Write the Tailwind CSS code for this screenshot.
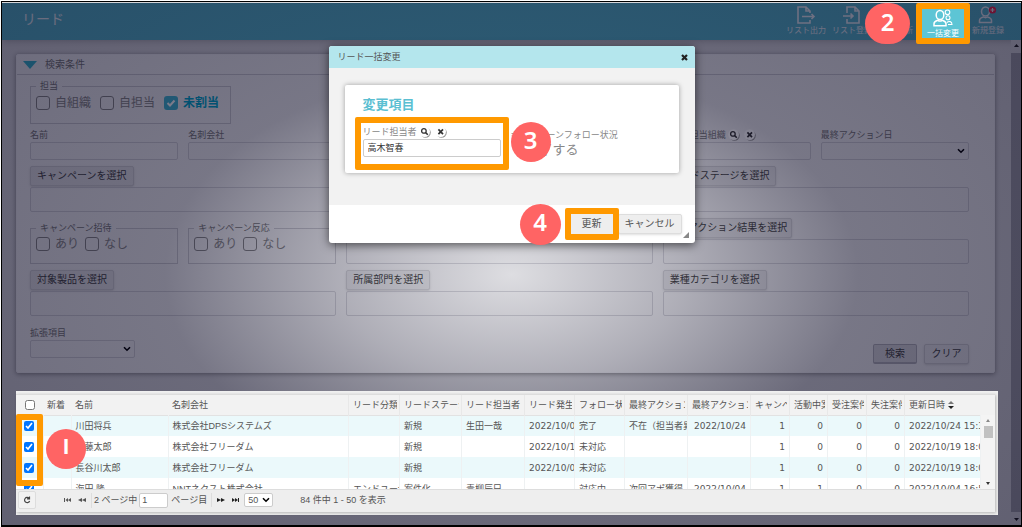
<!DOCTYPE html>
<html lang="ja">
<head>
<meta charset="utf-8">
<meta name="viewport" content="width=device-width, initial-scale=1">
<title>リード一括変更</title>
<script src="https://cdn.jsdelivr.net/npm/@tailwindcss/browser@4"></script>
</head>
<body class="bg-white pt-px pl-px font-['Liberation_Sans','Noto_Sans_CJK_JP',sans-serif] text-[9px] leading-[14px] text-[#555]">
<svg class="hidden" aria-hidden="true">
  <symbol id="chev" viewBox="0 0 8 6"><path d="M1 1.2 4 4.2 7 1.2" fill="none" stroke="#000" stroke-width="1.6"/></symbol>
  <symbol id="lens" viewBox="0 0 12 12"><circle cx="6.6" cy="6.6" r="5.2" fill="#999"/><circle cx="5.6" cy="5.6" r="5.4" fill="#fff"/><circle cx="4.9" cy="4.9" r="2.3" fill="none" stroke="#333" stroke-width="1.3"/><path d="m6.6 6.6 2.2 2.2" stroke="#333" stroke-width="1.5"/></symbol>
  <symbol id="clear" viewBox="0 0 12 12"><circle cx="6.6" cy="6.6" r="5.2" fill="#999"/><circle cx="5.6" cy="5.6" r="5.4" fill="#fff"/><path d="m3.4 3.4 4.6 4.8M8 3.4 3.4 8.2" stroke="#333" stroke-width="1.7"/></symbol>
</svg>
<div class="relative flex min-h-[calc(100vh-1px)] flex-col border border-b-2 border-black bg-[#d6d6da]">

  <header class="mt-px flex h-[37px] shrink-0 items-start justify-between bg-[#56b4c9] pr-[15px] pl-5 text-[#e8eef4] shadow-md">
    <h1 class="pt-1.5 text-[14px] leading-[20px]">リード</h1>
    <nav class="flex h-full gap-1.5 text-[8px] leading-[10px]">
      <button class="flex w-10 flex-col items-center justify-between pt-[3px] pb-1 whitespace-nowrap">
        <svg class="h-[18px] w-5" viewBox="0 0 20 18" fill="none" stroke="currentColor" stroke-width="1.6"><path d="M14 7V5l-4-4H2v16h12v-3M10 1v4h4M6 10.500h12M15.500 8l2.500 2.500-2.500 2.500"/></svg>リスト出力</button>
      <button class="flex w-10 flex-col items-center justify-between pt-[3px] pb-1 whitespace-nowrap">
        <svg class="h-[18px] w-5" viewBox="0 0 20 18" fill="none" stroke="currentColor" stroke-width="1.6"><path d="M5 7V1h8l4 4v12H5v-4M13 1v4h4M1 10h10M8.500 7.500 11 10l-2.500 2.500"/></svg>リスト登録</button>
      <button class="relative flex w-[38px] flex-col items-center justify-between pt-[3px] pb-1 whitespace-nowrap">
        <svg class="h-[18px] w-5" viewBox="0 0 20 18" fill="none" stroke="currentColor" stroke-width="1.4"><circle cx="8" cy="6" r="4.500"/><path d="M2 17c0-6 12-6 12 0z"/></svg>一括更新
        <span class="absolute top-0 -left-[13px] z-30 grid h-[41px] w-[45px] place-items-center rounded-full bg-[#ff6464] pb-1 font-['Noto_Sans',sans-serif] text-[24px] font-semibold text-white">2</span></button>
      <button class="relative z-20 flex w-[42px] flex-col items-center justify-between bg-[#5dc5d5] pt-1.5 pb-px whitespace-nowrap text-white">
        <svg class="h-[18px] w-5" viewBox="0 0 20 18" fill="none" stroke="currentColor" stroke-width="1.5"><ellipse cx="7" cy="6" rx="3.800" ry="4.600"/><path d="M1 16.800v-2c0-2 2-3 3.800-3.500 1.500 1 2.900 1 4.400 0 1.800.5 3.800 1.500 3.800 3.500v2z"/><circle cx="14.500" cy="3.300" r="2.300" stroke-width="1.100"/><circle cx="15" cy="8.800" r="2" stroke-width="1.100"/><path d="M14 13.500c2-2 5-1 5 2h-4" stroke-width="1.100"/></svg>一括変更
        <span class="absolute -inset-x-1.5 -top-0 -bottom-1 rounded-xs border-6 border-[#ff9900]"></span></button>
      <button class="flex w-9 flex-col items-center justify-between pt-[3px] pb-1 whitespace-nowrap">
        <svg class="h-[18px] w-5" viewBox="0 0 20 18" fill="none" stroke="currentColor" stroke-width="1.5"><ellipse cx="7.500" cy="5.500" rx="4" ry="4.500"/><path d="M1.500 16.500v-2c0-2 2-3 4-3.500 1.500 1 2.500 1 4 0 2 .5 4 1.500 4 3.500v2z"/><circle cx="14.500" cy="4" r="3.600" fill="#f0264a" stroke="none"/><path d="M12.500 4h4M14.500 2v4" stroke-width="1.200"/></svg>新規登録</button>
    </nav>
  </header>

  <div class="flex flex-1">
    <main class="min-w-0 flex-1 pt-3.5 pr-[13px] pb-2.5 pl-3.5">
      <form class="mr-[3px] rounded-xs border border-[#ececef] bg-[#f0f0f2] text-[#777] shadow-[0_1px_5px_rgb(0_0_0/0.4)]">
        <h2 class="flex h-5 items-center gap-2 border-b border-[#c8c8ce] pl-1.5 text-[10px] leading-[16px]">
          <svg class="h-2 w-3.5" viewBox="0 0 14 8"><path d="M0 0h14L7 8z" fill="#38b4cc"/></svg>検索条件</h2>
        <div class="pt-1 pr-[25px] pb-3.5 pl-[13px]">
          <fieldset class="h-[45px] w-[201px] border border-[#c8c8ce] px-[5px]">
            <legend class="px-1 leading-[14px]">担当</legend>
            <div class="flex items-center gap-[9px] pt-px text-[12px] leading-[18px] text-[#888]">
              <label class="flex items-center gap-[5px]"><input type="checkbox" class="size-3.5 appearance-none rounded-[3px] border border-[#888]">自組織</label>
              <label class="flex items-center gap-[5px]"><input type="checkbox" class="size-3.5 appearance-none rounded-[3px] border border-[#888]">自担当</label>
              <label class="flex items-center gap-[5px] font-bold text-[#00a8cc]"><span class="relative flex"><input type="checkbox" checked class="size-3.5 appearance-none rounded-[3px] bg-[#41b7d2]"><svg class="pointer-events-none absolute inset-0 size-3.5" viewBox="0 0 14 14"><path d="m3.500 7 2.500 2.500 4.500-5" fill="none" stroke="#fff" stroke-width="2"/></svg></span>未割当</label>
            </div>
          </fieldset>

          <div class="mt-1 grid grid-cols-6 gap-x-2.5 gap-y-1.5">
            <label class="block whitespace-nowrap">名前<input class="block h-[18px] w-full rounded-xs border border-[#cfcfd5]"></label>
            <label class="col-span-2 block whitespace-nowrap">名刺会社<input class="block h-[18px] w-full rounded-xs border border-[#cfcfd5]"></label>
            <label class="block whitespace-nowrap">リード担当者<input class="block h-[18px] w-full rounded-xs border border-[#cfcfd5]"></label>
            <label class="block whitespace-nowrap"><span class="flex items-center">リード担当組織<svg class="ml-0.5 size-3"><use href="#lens"/></svg><svg class="ml-1 size-3"><use href="#clear"/></svg></span><input class="block h-[18px] w-full rounded-xs border border-[#cfcfd5]"></label>
            <label class="block whitespace-nowrap">最終アクション日<span class="relative block"><select class="block h-[18px] w-full appearance-none rounded-xs border border-[#cfcfd5]"><option></option></select><svg class="pointer-events-none absolute top-1.5 right-1 h-1.5 w-2"><use href="#chev"/></svg></span></label>

            <div class="col-span-2"><button type="button" class="mb-px block h-5 rounded-xs border border-[#cfcfd3] bg-[#e2e2e5] px-1.5 text-[10px] text-[#444] shadow-sm">キャンペーンを選択</button><div class="h-[25px] rounded-xs border border-[#cfcfd5]"></div></div>
            <div class="col-span-2"><button type="button" class="mb-px block h-5 rounded-xs border border-[#cfcfd3] bg-[#e2e2e5] px-1.5 text-[10px] text-[#444] shadow-sm">リード分類を選択</button><div class="h-[25px] rounded-xs border border-[#cfcfd5]"></div></div>
            <div class="col-span-2"><button type="button" class="mb-px block h-5 rounded-xs border border-[#cfcfd3] bg-[#e2e2e5] px-1.5 text-[10px] text-[#444] shadow-sm">リードステージを選択</button><div class="h-[25px] rounded-xs border border-[#cfcfd5]"></div></div>

            <fieldset class="mt-[3px] h-[43px] border border-[#c8c8ce] px-[5px]">
              <legend class="px-1">キャンペーン招待</legend>
              <div class="flex items-center gap-1.5 text-[12px] leading-[18px] text-[#888]">
                <label class="flex items-center gap-[5px]"><input type="checkbox" class="size-3.5 appearance-none rounded-[3px] border border-[#888]">あり</label>
                <label class="flex items-center gap-[5px]"><input type="checkbox" class="size-3.5 appearance-none rounded-[3px] border border-[#888]">なし</label>
              </div>
            </fieldset>
            <fieldset class="mt-[3px] h-[43px] border border-[#c8c8ce] px-[5px]">
              <legend class="px-1">キャンペーン反応</legend>
              <div class="flex items-center gap-1.5 text-[12px] leading-[18px] text-[#888]">
                <label class="flex items-center gap-[5px]"><input type="checkbox" class="size-3.5 appearance-none rounded-[3px] border border-[#888]">あり</label>
                <label class="flex items-center gap-[5px]"><input type="checkbox" class="size-3.5 appearance-none rounded-[3px] border border-[#888]">なし</label>
              </div>
            </fieldset>
            <div class="col-span-2"><button type="button" class="mb-px block h-5 rounded-xs border border-[#cfcfd3] bg-[#e2e2e5] px-1.5 text-[10px] text-[#444] shadow-sm">アクションを選択</button><div class="h-[25px] rounded-xs border border-[#cfcfd5]"></div></div>
            <div class="col-span-2"><button type="button" class="mb-px block h-5 rounded-xs border border-[#cfcfd3] bg-[#e2e2e5] px-1 text-[10px] text-[#444] shadow-sm">最終アクション結果を選択</button><div class="h-[25px] rounded-xs border border-[#cfcfd5]"></div></div>

            <div class="col-span-2"><button type="button" class="mb-px block h-5 rounded-xs border border-[#cfcfd3] bg-[#e2e2e5] px-1.5 text-[10px] text-[#444] shadow-sm">対象製品を選択</button><div class="h-[25px] rounded-xs border border-[#cfcfd5]"></div></div>
            <div class="col-span-2"><button type="button" class="mb-px block h-5 rounded-xs border border-[#cfcfd3] bg-[#e2e2e5] px-1.5 text-[10px] text-[#444] shadow-sm">所属部門を選択</button><div class="h-[25px] rounded-xs border border-[#cfcfd5]"></div></div>
            <div class="col-span-2"><button type="button" class="mb-px block h-5 rounded-xs border border-[#cfcfd3] bg-[#e2e2e5] px-1.5 text-[10px] text-[#444] shadow-sm">業種カテゴリを選択</button><div class="h-[25px] rounded-xs border border-[#cfcfd5]"></div></div>
          </div>

          <div class="mt-2.5 flex items-end justify-between">
            <label class="block w-[105px]">拡張項目<span class="relative block"><select class="block h-[18px] w-full appearance-none rounded-xs border border-[#cfcfd5]"><option></option></select><svg class="pointer-events-none absolute top-1.5 right-1 h-1.5 w-2"><use href="#chev"/></svg></span></label>
            <div class="-mb-1.5 flex gap-[7px] text-[10px] text-[#444]">
              <button type="button" class="h-5 w-11 rounded-xs border border-b-2 border-[#b0b0b8] bg-[#d6d6da]">検索</button>
              <button type="button" class="h-5 w-[45px] rounded-xs border border-[#ceced2] bg-[#e8e8eb] shadow-sm">クリア</button>
            </div>
          </div>
        </div>
      </form>

      <section class="relative z-20 mt-[18px] bg-[#f0f0f0] py-[3px] pr-[3px]">
        <div class="relative border-t border-[#ddd] bg-[#f2f2f2] shadow-[1px_1px_3px_rgb(0_0_0/0.25)]">
          <div class="h-[94px] overflow-hidden pr-3.5">
            <table class="w-full table-fixed border-collapse text-left whitespace-nowrap">
              <colgroup><col class="w-[27px]"><col class="w-[28px]"><col class="w-[97px]"><col><col class="w-[51px]"><col class="w-[62px]"><col class="w-[63px]"><col class="w-[50px]"><col class="w-[50px]"><col class="w-[63px]"><col class="w-[63px]"><col class="w-[39px]"><col class="w-[38px]"><col class="w-[39px]"><col class="w-[38px]"><col class="w-[76px]"></colgroup>
              <thead>
                <tr class="h-5 border-b border-[#e2e2e2] [&>th]:p-0 [&>th]:font-normal [&>th+th]:pr-0.5 [&>th+th]:pl-1 [&_div]:overflow-hidden">
                  <th><input type="checkbox" aria-label="すべて選択" class="mx-auto block size-2.5"></th>
                  <th><div>新着</div></th><th><div>名前</div></th><th><div>名刺会社</div></th>
                  <th class="border-l border-[#e8e8e8]"><div>リード分類</div></th><th class="border-l border-[#e8e8e8]"><div>リードステージ</div></th><th class="border-l border-[#e8e8e8]"><div>リード担当者</div></th><th class="border-l border-[#e8e8e8]"><div>リード発生</div></th><th class="border-l border-[#e8e8e8]"><div>フォロー状況</div></th><th class="border-l border-[#e8e8e8]"><div>最終アクション</div></th><th class="border-l border-[#e8e8e8]"><div>最終アクション日</div></th><th class="border-l border-[#e8e8e8]"><div>キャンペーン</div></th><th class="border-l border-[#e8e8e8]"><div>活動中案件</div></th><th class="border-l border-[#e8e8e8]"><div>受注案件</div></th><th class="border-l border-[#e8e8e8]"><div>失注案件</div></th>
                  <th class="border-l border-[#e8e8e8]"><div class="flex items-center gap-[3px]">更新日時<svg class="h-2 w-1.5" viewBox="0 0 6 8"><path d="M0 3h6L3 0z" fill="#777"/><path d="M0 5h6L3 8z" fill="#222"/></svg></div></th>
                </tr>
              </thead>
              <tbody class="[&>tr]:h-[21px] [&_td]:overflow-hidden [&_td]:border-r [&_td]:border-[#eef1f2] [&_td]:p-0 [&_td+td]:pl-1">
                <tr class="bg-[#ebf9fb]"><td><input type="checkbox" checked aria-label="川田将兵" class="mx-auto block size-2.5"></td><td></td><td>川田将兵</td><td>株式会社DPSシステムズ</td><td></td><td>新規</td><td>生田一哉</td><td class="font-['DejaVu_Sans',sans-serif]">2022/10/0</td><td>完了</td><td>不在（担当者異動）</td><td class="font-['DejaVu_Sans',sans-serif]"><div class="pl-0.5">2022/10/24</div></td><td class="text-right font-['DejaVu_Sans',sans-serif]"><div class="pr-1">1</div></td><td class="text-right font-['DejaVu_Sans',sans-serif]"><div class="pr-1">0</div></td><td class="text-right font-['DejaVu_Sans',sans-serif]"><div class="pr-1">0</div></td><td class="text-right font-['DejaVu_Sans',sans-serif]"><div class="pr-1">0</div></td><td class="font-['DejaVu_Sans',sans-serif]">2022/10/24 15:30</td></tr>
                <tr class="bg-white"><td><input type="checkbox" checked aria-label="佐藤太郎" class="mx-auto block size-2.5"></td><td></td><td>佐藤太郎</td><td>株式会社フリーダム</td><td></td><td>新規</td><td></td><td class="font-['DejaVu_Sans',sans-serif]">2022/10/1</td><td>未対応</td><td></td><td></td><td class="text-right font-['DejaVu_Sans',sans-serif]"><div class="pr-1">1</div></td><td class="text-right font-['DejaVu_Sans',sans-serif]"><div class="pr-1">0</div></td><td class="text-right font-['DejaVu_Sans',sans-serif]"><div class="pr-1">0</div></td><td class="text-right font-['DejaVu_Sans',sans-serif]"><div class="pr-1">0</div></td><td class="font-['DejaVu_Sans',sans-serif]">2022/10/19 18:00</td></tr>
                <tr class="bg-[#ebf9fb]"><td><input type="checkbox" checked aria-label="長谷川太郎" class="mx-auto block size-2.5"></td><td></td><td>長谷川太郎</td><td>株式会社フリーダム</td><td></td><td>新規</td><td></td><td class="font-['DejaVu_Sans',sans-serif]">2022/10/0</td><td>未対応</td><td></td><td></td><td class="text-right font-['DejaVu_Sans',sans-serif]"><div class="pr-1">1</div></td><td class="text-right font-['DejaVu_Sans',sans-serif]"><div class="pr-1">0</div></td><td class="text-right font-['DejaVu_Sans',sans-serif]"><div class="pr-1">0</div></td><td class="text-right font-['DejaVu_Sans',sans-serif]"><div class="pr-1">0</div></td><td class="font-['DejaVu_Sans',sans-serif]">2022/10/19 18:00</td></tr>
                <tr class="bg-white"><td><input type="checkbox" checked aria-label="海田 隆" class="mx-auto block size-2.5"></td><td></td><td>海田 隆</td><td>NNTネクスト株式会社</td><td>エンドユーザ</td><td>案件化</td><td>青柳辰巳</td><td></td><td>対応中</td><td>次回アポ獲得</td><td class="font-['DejaVu_Sans',sans-serif]"><div class="pl-0.5">2022/10/04</div></td><td class="text-right font-['DejaVu_Sans',sans-serif]"><div class="pr-1">1</div></td><td class="text-right font-['DejaVu_Sans',sans-serif]"><div class="pr-1">1</div></td><td class="text-right font-['DejaVu_Sans',sans-serif]"><div class="pr-1">0</div></td><td class="text-right font-['DejaVu_Sans',sans-serif]"><div class="pr-1">0</div></td><td class="font-['DejaVu_Sans',sans-serif]">2022/10/04 16:50</td></tr>
              </tbody>
            </table>
          </div>
          <div class="absolute top-5 right-0 flex h-[74px] w-3.5 flex-col items-center bg-[#f4f4f4] py-1">
            <svg class="h-[3px] w-1" viewBox="0 0 4 3"><path d="M0 3h4L2 0z" fill="#888"/></svg>
            <span class="mt-1 h-3 w-[9px] bg-[#c1c1c1]"></span>
            <svg class="mt-auto h-[3px] w-1" viewBox="0 0 4 3"><path d="M0 0h4L2 3z" fill="#333"/></svg>
          </div>
          <span class="absolute top-[19px] left-0 h-[72px] w-[27px] rounded-xs border-6 border-[#ff9900]"></span>
          <span aria-label="1" class="absolute top-[34px] left-[30px] grid size-10 place-items-center rounded-full bg-[#ff6464] pb-1 text-[22px] font-bold text-white">I</span>

          <div class="flex h-[23px] items-center border-t border-[#ddd] bg-[#eee] pb-0.5 pl-0.5">
            <button aria-label="再読み込み" class="grid h-[18px] w-[18px] place-items-center rounded-xs border border-[#ddd] bg-[#f2f2f2]"><svg class="size-2" viewBox="0 0 8 8" fill="none" stroke="#444" stroke-width="1.200"><path d="M6 2.200A2.600 2.600 0 1 0 6.600 5M6.500.5v2.300H4"/></svg></button>
            <button aria-label="最初" class="ml-7"><svg class="h-1.5 w-[7px]" viewBox="0 0 7 6" fill="#555"><path d="M0 1h1v4H0zM4 1v4L1.500 3zM7 1v4L4 3z"/></svg></button>
            <button aria-label="前へ" class="ml-[7px]"><svg class="h-1.5 w-2" viewBox="0 0 8 6" fill="#555"><path d="M4 1v4L0 3zM8 1v4L4 3z"/></svg></button>
            <label class="ml-[5px] flex items-center border-l border-[#ddd] pl-0.5 whitespace-nowrap">2 ページ中<input value="1" class="ml-0.5 h-[15px] w-[29px] rounded-xs border border-[#ccc] bg-white pl-0.5"></label>
            <span class="ml-[3px] border-r border-[#ddd] pr-1">ページ目</span>
            <button aria-label="次へ" class="ml-[5px]"><svg class="h-1.5 w-2" viewBox="0 0 8 6" fill="#222"><path d="M0 1v4l4-2zM4 1v4l4-2z"/></svg></button>
            <button aria-label="最後" class="ml-[7px]"><svg class="h-1.5 w-[7px]" viewBox="0 0 7 6" fill="#222"><path d="M6 1h1v4H6zM0 1v4l3-2zM3 1v4l3-2z"/></svg></button>
            <span class="relative ml-[5px]"><select aria-label="表示件数" class="block h-[14px] w-[29px] appearance-none rounded-xs border border-[#ccc] bg-white pl-[3px] leading-[12px]"><option>50</option></select><svg class="pointer-events-none absolute top-1 right-[3px] h-1.5 w-2"><use href="#chev"/></svg></span>
            <span class="ml-[27px] whitespace-nowrap">84 件中 1 - 50 を表示</span>
          </div>
        </div>
      </section>
    </main>
    <div class="flex w-2.5 flex-col items-center bg-[#d6d6da] py-1">
      <svg class="h-[3px] w-[5px]" viewBox="0 0 5 3"><path d="M0 3h5L2.500 0z" fill="#222"/></svg>
      <span class="my-1.5 w-full flex-1 bg-[#a0a0a8]"></span>
      <svg class="h-[3px] w-[5px]" viewBox="0 0 5 3"><path d="M0 0h5L2.500 3z" fill="#222"/></svg>
    </div>
  </div>

  <div class="pointer-events-none absolute inset-0 top-px z-10 bg-[radial-gradient(34%_40%_at_50%_52%,rgb(4_2_30/0.08),rgb(4_2_30/0.28)_50%,rgb(4_2_30/0.51)_100%,rgb(4_2_30/0.54)_160%,rgb(4_2_30/0.57)_220%)]"></div>

  <div role="dialog" aria-label="リード一括変更" class="absolute top-11 left-1/2 z-20 w-[366px] -translate-x-1/2 rounded-[3px] bg-white shadow-[0_2px_10px_rgb(0_0_0/0.6)]">
    <div class="flex h-[22px] items-center justify-between rounded-t-[3px] bg-[#b4e6ed] pr-[7px] pl-[9px]">
      <h2>リード一括変更</h2>
      <button aria-label="閉じる"><svg class="size-[7px]" viewBox="0 0 7 7"><path d="m1 1 5 5M6 1 1 6" stroke="#222" stroke-width="2.200"/></svg></button>
    </div>
    <div class="bg-[#f2f2f2] px-4 pt-[17px] pb-8">
      <div class="h-[88px] rounded-xs bg-white px-[18px] pt-2.5 shadow-[0_0_5px_rgb(0_0_0/0.35)]">
        <h3 class="text-[13px] leading-[20px] font-bold text-[#5bbfd2]">変更項目</h3>
        <div class="flex gap-2.5 pt-2.5 text-[#888]">
          <div class="relative w-[138px]">
            <label for="owner" class="flex items-center leading-[14px]">リード担当者<svg class="ml-0.5 size-3"><use href="#lens"/></svg><svg class="ml-1 size-3"><use href="#clear"/></svg></label>
            <input id="owner" value="高木智春" class="block h-[18px] w-full rounded-xs border border-[#ccc] bg-white pb-0.5 pl-1 text-[#333]">
            <span class="pointer-events-none absolute -inset-2 -bottom-3 rounded-xs border-6 border-[#ff9900]"></span>
          </div>
          <div class="relative pt-[3px] whitespace-nowrap">キャンペーンフォロー状況
            <div class="pl-4 text-[13px] leading-[16px]">完了する</div>
            <span class="absolute -top-[3px] left-0 grid size-10 place-items-center rounded-full bg-[#ff6464] pb-1 font-['Noto_Sans',sans-serif] text-[24px] font-semibold text-white">3</span>
          </div>
        </div>
      </div>
    </div>
    <div class="relative flex h-[38px] items-center justify-end gap-[5px] pr-[13px] text-[10px]">
      <span class="mr-[5px] grid size-[41px] shrink-0 place-items-center rounded-full bg-[#ff6464] pb-1 font-['Noto_Sans',sans-serif] text-[24px] font-semibold text-white">4</span>
      <div class="relative"><button class="block h-5 w-[42px] bg-[#eee]">更新</button><span class="pointer-events-none absolute -inset-1.5 rounded-xs border-6 border-[#ff9900]"></span></div>
      <button class="h-5 w-[64px] rounded-xs border border-[#ddd] bg-[#eee] shadow-sm">キャンセル</button>
      <svg class="absolute right-1.5 bottom-[5px] size-1.5" viewBox="0 0 6 6"><path d="M6 0v6H0z" fill="#888"/></svg>
    </div>
  </div>
</div>
</body>
</html>
